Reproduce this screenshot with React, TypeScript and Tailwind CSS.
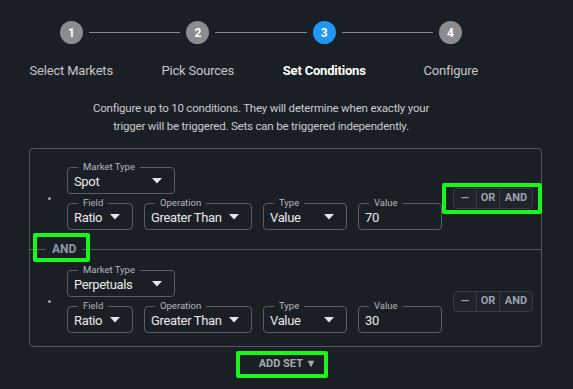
import { ReactNode } from 'react';

const STEPS = ['Select Markets', 'Pick Sources', 'Set Conditions', 'Configure'];
const ACTIVE = 2;

function Caret() {
  return (
    <svg width="10" height="6" viewBox="0 0 10 6" className="shrink-0">
      <path d="M0 0 L10 0 L5 5.5 Z" fill="#e6e6e6" />
    </svg>
  );
}

function Outlined({
  label,
  width,
  children,
}: {
  label: string;
  width: string;
  children: ReactNode;
}) {
  return (
    <div
      className={`relative flex h-[27px] items-center rounded-[4px] border border-[#5a5e64] pl-[6px] pr-[12px] ${width}`}
    >
      <span className="absolute -top-[7px] left-[10px] bg-[#1a1f26] px-[5px] text-[9.5px] leading-[12px] text-[#b5b8bc]">
        {label}
      </span>
      {children}
    </div>
  );
}

function Select({ label, value, width }: { label: string; value: string; width: string }) {
  return (
    <Outlined label={label} width={width}>
      <span className="flex-1 whitespace-nowrap pt-[2px] text-[13px] tracking-[-0.35px] text-[#e8e8e8]">{value}</span>
      <Caret />
    </Outlined>
  );
}

function ButtonGroup({ highlight }: { highlight?: boolean }) {
  return (
    <div className="relative ml-[11px] flex h-[21px] w-[80px] rounded-[4px] border border-[#373c43] bg-[#1e232a] text-[11px] font-bold text-[#9da1a6]">
      <span className="flex w-[23px] items-center justify-center border-r border-[#373c43]">—</span>
      <span className="flex w-[23px] items-center justify-center border-r border-[#373c43]">OR</span>
      <span className="flex flex-1 items-center justify-center">AND</span>
      {highlight && (
        <span className="pointer-events-none absolute -bottom-[6px] -left-[12px] -right-[10px] -top-[6px] rounded-[2px] border-4 border-[#19f619]" />
      )}
    </div>
  );
}

function ConditionSet({ market, value, highlight, pad }: { market: string; value: string; highlight?: boolean; pad: string }) {
  return (
    <div className={`flex items-center pl-[18px] ${pad}`}>
      <span className="mr-[16px] h-[3px] w-[3px] rounded-full bg-[#a0a4a8]" />
      <div className="flex flex-col gap-[9px]">
        <div className="flex">
          <Select label="Market Type" value={market} width="w-[108px]" />
        </div>
        <div className="flex gap-[11px]">
          <Select label="Field" value="Ratio" width="w-[66px]" />
          <Select label="Operation" value="Greater Than" width="w-[108px]" />
          <Select label="Type" value="Value" width="w-[84px]" />
          <Outlined label="Value" width="w-[84px]">
            <span className="pt-[2px] text-[13px] tracking-[-0.35px] text-[#e8e8e8]">{value}</span>
          </Outlined>
        </div>
      </div>
      <ButtonGroup highlight={highlight} />
    </div>
  );
}

export default function App() {
  return (
    <div
      className="h-[389px] w-[573px] overflow-hidden bg-[#1a1f26]"
      style={{ fontFamily: 'Roboto, "Noto Sans", sans-serif' }}
    >
      {/* stepper */}
      <div className="flex items-center pl-[60px] pt-[21px]" style={{ width: 462 }}>
        {STEPS.map((s, i) => (
          <div key={s} className={`flex items-center ${i < STEPS.length - 1 ? 'flex-1' : ''}`}>
            <div
              className={`flex h-[23px] w-[23px] shrink-0 items-center justify-center rounded-full text-[12px] font-bold text-white ${
                i === ACTIVE ? 'bg-[#2196f3]' : 'bg-[#8a8c8f]'
              }`}
            >
              {i + 1}
            </div>
            {i < STEPS.length - 1 && <div className="mx-[6px] h-px flex-1 bg-[#85888c]" />}
          </div>
        ))}
      </div>
      <div className="ml-[8px] mt-[18px] grid w-[506px] grid-cols-4">
        {STEPS.map((s, i) => (
          <div
            key={s}
            className={`text-center text-[13px] leading-[18px] tracking-[-0.2px] ${
              i === ACTIVE ? 'font-bold text-white' : 'text-[#c4c6c9]'
            }`}
          >
            {s}
          </div>
        ))}
      </div>

      {/* description */}
      <p className="ml-[8px] mt-[19px] w-[506px] text-center text-[11.5px] leading-[18px] tracking-[-0.2px] text-[#c9cbce]">
        Configure up to 10 conditions. They will determine when exactly your
        <br />
        trigger will be triggered. Sets can be triggered independently.
      </p>

      {/* condition sets */}
      <div className="ml-[29px] mt-[13px] w-[513px] rounded-[4px] border border-[#54585e]">
        <ConditionSet market="Spot" value="70" highlight pad="pb-[19px] pt-[18px]" />
        <div className="relative h-px bg-[#54585e]">
          <span className="absolute left-[16px] top-[-7px] bg-[#1a1f26] px-[6px] text-[12px] font-bold leading-[14px] text-[#8e97a8]">
            AND
            <span className="pointer-events-none absolute -bottom-[6px] -left-[13px] -right-[8px] -top-[9px] rounded-[2px] border-4 border-[#19f619]" />
          </span>
        </div>
        <ConditionSet market="Perpetuals" value="30" pad="pb-[13px] pt-[20px]" />
      </div>

      <div className="mt-[8px] flex w-[573px] justify-center pr-[8px]">
        <button className="relative flex h-[19px] w-[83px] items-center justify-center pl-[10px] text-[11px] font-bold text-[#a6aaae]">
          ADD SET ▼
          <span className="pointer-events-none absolute -bottom-[4px] -left-[5px] -right-[4px] -top-[4px] rounded-[2px] border-4 border-[#19f619]" />
        </button>
      </div>
    </div>
  );
}
